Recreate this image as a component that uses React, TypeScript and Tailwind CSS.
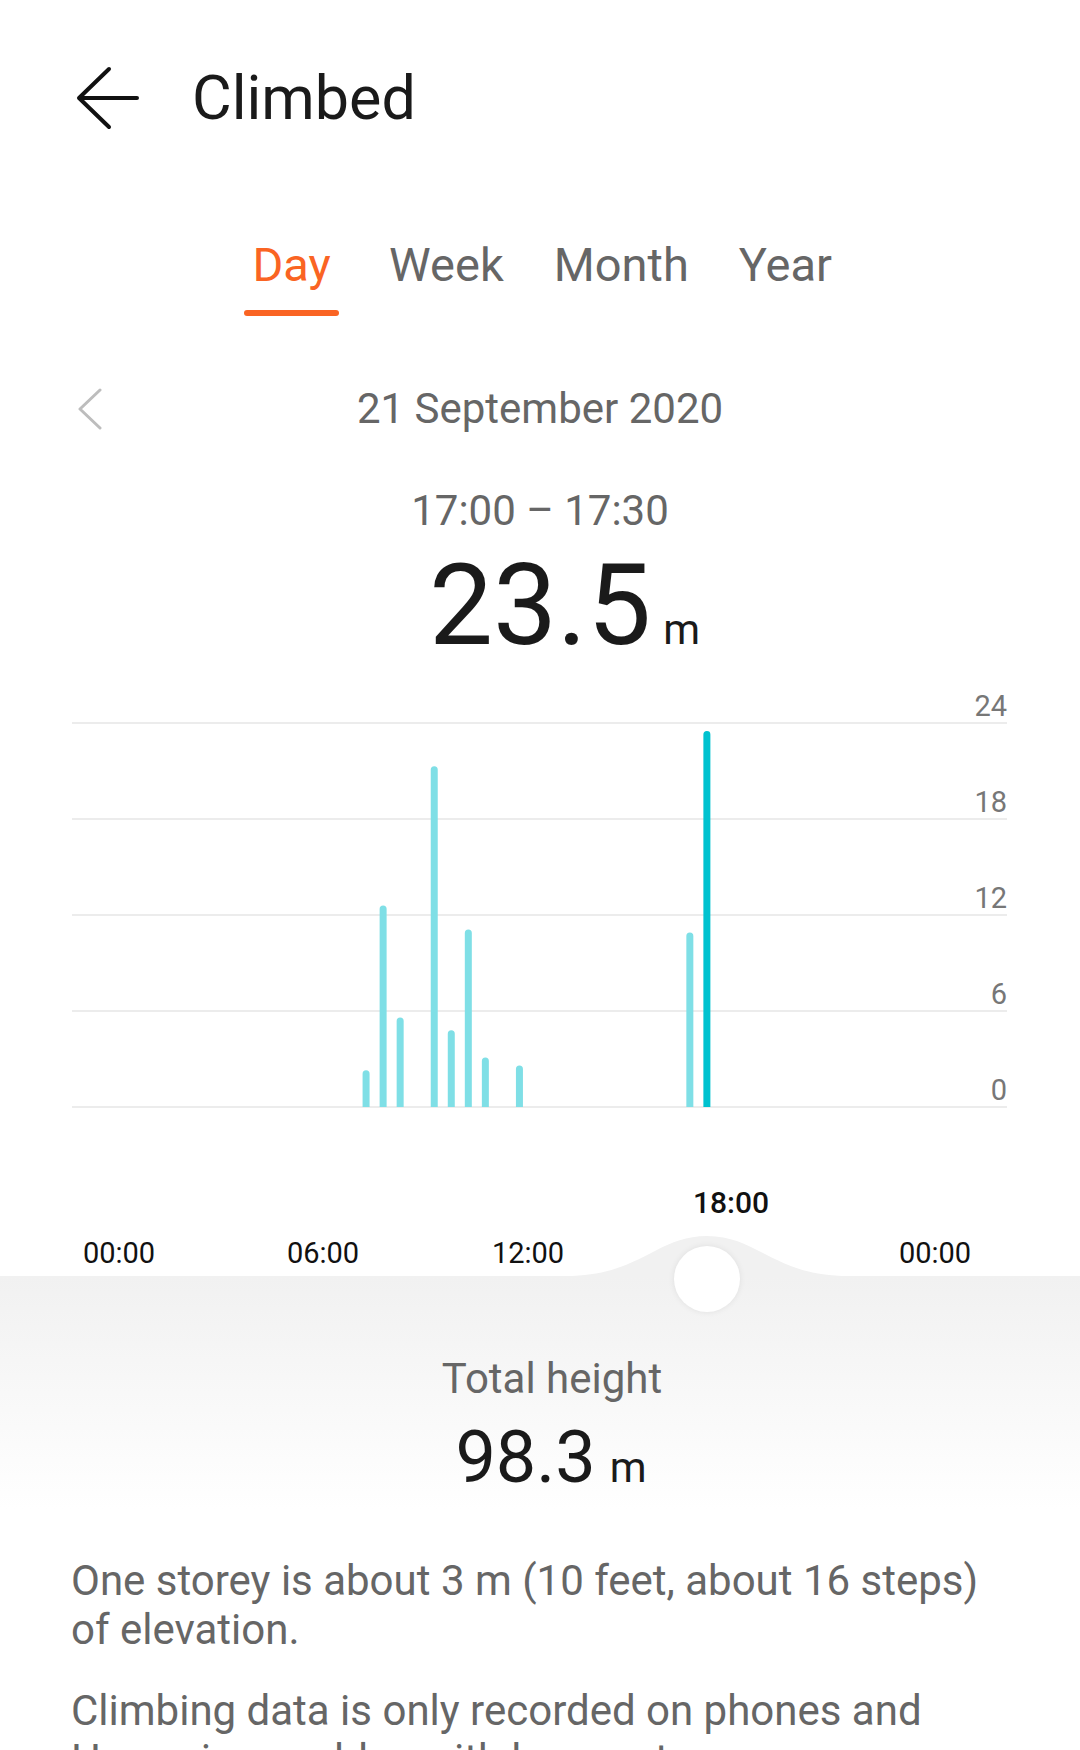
import React from 'react';

interface Bar {
  slot: number;
  value: number;
  active?: boolean;
}

// half-hour slots, values in metres
const bars: Bar[] = [
  { slot: 14, value: 2.3 },
  { slot: 15, value: 12.6 },
  { slot: 16, value: 5.6 },
  { slot: 18, value: 21.3 },
  { slot: 19, value: 4.8 },
  { slot: 20, value: 11.1 },
  { slot: 21, value: 3.1 },
  { slot: 23, value: 2.6 },
  { slot: 33, value: 10.9 },
  { slot: 34, value: 23.5, active: true },
];

const tabs = ['Day', 'Week', 'Month', 'Year'];

const gridY = [43, 139, 235, 331, 427];
const gridLabels = ['24', '18', '12', '6', '0'];
const zeroY = 427;
const pxPerUnit = 16;
const slotX = (slot: number) => 119 + (slot + 0.5) * 17.04;

function BarPath({ bar }: { bar: Bar }) {
  const cx = slotX(bar.slot);
  const top = zeroY - bar.value * pxPerUnit;
  const r = 3.5;
  const d = `M ${cx - r} ${zeroY} V ${top + r} A ${r} ${r} 0 0 1 ${cx + r} ${top + r} V ${zeroY} Z`;
  return <path d={d} fill={bar.active ? '#00c2cf' : '#7fdfe6'} />;
}

function Chart() {
  return (
    <svg width="1080" height="596" viewBox="0 0 1080 596" className="block">
      <defs>
        <linearGradient id="fade" x1="0" y1="0" x2="0" y2="1">
          <stop offset="0" stopColor="#00c2cf" stopOpacity="0.7" />
          <stop offset="1" stopColor="#00c2cf" stopOpacity="0" />
        </linearGradient>
      </defs>

      {gridY.map((y, i) => (
        <g key={y}>
          <line x1="72" y1={y} x2="1007" y2={y} stroke="#e6e6e6" strokeWidth="1.5" />
          <text
            x="1007"
            y={y - 7}
            textAnchor="end"
            fontSize="29"
            fill="#777777"
            fontFamily="Roboto, sans-serif"
          >
            {gridLabels[i]}
          </text>
        </g>
      ))}

      {bars.map(bar => (
        <BarPath key={bar.slot} bar={bar} />
      ))}

      <line x1="707" y1={zeroY} x2="707" y2="495" stroke="url(#fade)" strokeWidth="1.5" />

      <text
        x="731"
        y="533"
        textAnchor="middle"
        fontSize="30"
        fontWeight="500"
        fill="#111111"
        fontFamily="Roboto, sans-serif"
      >
        18:00
      </text>

      {[
        { x: 119, t: '00:00' },
        { x: 323, t: '06:00' },
        { x: 528, t: '12:00' },
        { x: 935, t: '00:00' },
      ].map(l => (
        <text
          key={l.x}
          x={l.x}
          y="583"
          textAnchor="middle"
          fontSize="29"
          fill="#111111"
          fontFamily="Roboto, sans-serif"
        >
          {l.t}
        </text>
      ))}

      {/* bump of the slider track */}
      <path d="M 566 596 C 640 596, 656 556, 707 556 C 758 556, 774 596, 848 596 Z" fill="#f1f1f1" />
    </svg>
  );
}

export default function App() {
  return (
    <div className="w-[1080px] h-[1750px] overflow-hidden bg-white font-['Roboto',sans-serif]">
      {/* header */}
      <div className="flex items-center h-[92px] mt-[52px] pl-[76px]">
        <svg width="64" height="64" viewBox="0 0 64 64">
          <path
            d="M 61 32 H 4 M 33 3 L 3 32 L 33 61"
            fill="none"
            stroke="#111111"
            strokeWidth="4"
            strokeLinecap="round"
            strokeLinejoin="round"
          />
        </svg>
        <h1 className="ml-[52px] text-[61px] leading-none text-[#1a1a1a]">Climbed</h1>
      </div>

      {/* tabs */}
      <div className="flex justify-center gap-[50px] mt-[98px] pr-[4px]">
        {tabs.map((tab, i) => (
          <div key={tab} className="flex flex-col items-center">
            <span
              className={`text-[47px] leading-[46px] ${i === 0 ? 'text-[#fa6423]' : 'text-[#666666]'}`}
            >
              {tab}
            </span>
            {i === 0 && <div className="mt-[22px] h-[6px] w-[95px] rounded-full bg-[#fa6423]" />}
          </div>
        ))}
      </div>

      {/* date */}
      <div className="grid grid-cols-[1fr_auto_1fr] items-center h-[60px] mt-[63px]">
        <div className="pl-[78px]">
          <svg width="26" height="44" viewBox="0 0 26 44" className="block">
            <path
              d="M 22 3 L 2 22 L 22 41"
              fill="none"
              stroke="#bdbdbd"
              strokeWidth="3"
              strokeLinecap="round"
              strokeLinejoin="round"
            />
          </svg>
        </div>
        <span className="text-[42px] leading-[60px] text-[#666666]">21 September 2020</span>
        <div />
      </div>

      {/* selected range */}
      <div className="mt-[51px] text-center text-[42px] leading-[42px] text-[#666666]">17:00 – 17:30</div>
      <div className="flex justify-center items-baseline mt-[16px] pl-[49px] text-[#1a1a1a]">
        <span className="text-[114px] leading-none">23.5</span>
        <span className="pl-[12px] text-[42px] leading-none">m</span>
      </div>

      {/* chart + summary */}
      <div className="relative mt-[18px]">
        <Chart />
        <div className="absolute left-[674px] top-[566px] w-[66px] h-[66px] rounded-full bg-white shadow-[0_0_6px_rgba(0,0,0,0.08)]" />

        <div className="bg-gradient-to-b from-[#f1f1f1] to-white pt-[82px] pb-[16px] flex flex-col items-center">
          <span className="pl-[24px] text-[42px] leading-[42px] text-[#666666]">Total height</span>
          <div className="flex items-baseline mt-[22px] pl-[22px] text-[#1a1a1a]">
            <span className="text-[72px] leading-none">98.3</span>
            <span className="pl-[14px] text-[42px] leading-none">m</span>
          </div>
        </div>
      </div>

      {/* notes */}
      <div className="pl-[71px] pr-[90px] text-[42px] leading-[49px] text-[#666666]">
        <p className="mt-[46px]">One storey is about 3 m (10 feet, about 16 steps) of elevation.</p>
        <p className="mt-[32px]">
          Climbing data is only recorded on phones and Huawei wearables with barometers.
        </p>
      </div>
    </div>
  );
}
